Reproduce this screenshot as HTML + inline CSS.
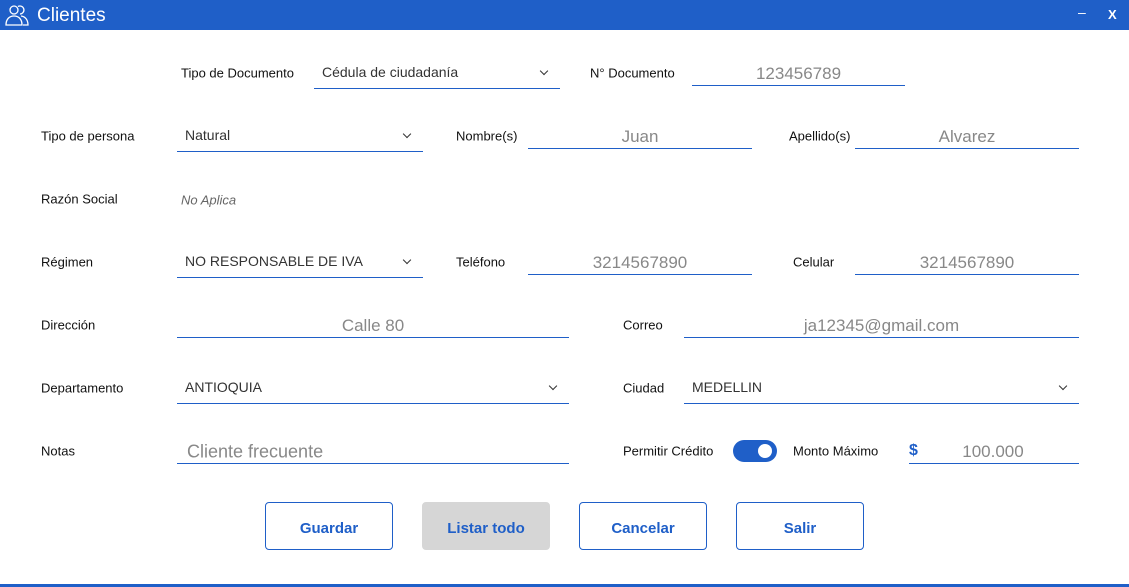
<!DOCTYPE html>
<html><head><meta charset="utf-8"><style>
*{margin:0;padding:0;box-sizing:border-box}
body{width:1129px;height:587px;background:#fff;position:relative;overflow:hidden;font-family:"Liberation Sans",sans-serif;color:#111}
.bar{position:absolute;left:0;top:0;width:1129px;height:30px;background:#1f5fc8;color:#fff}
.bar .t{position:absolute;left:37px;top:5px;font-size:19px}
.bar .m{position:absolute;left:1078px;top:4px;font-size:14px}
.bar .x{position:absolute;left:1108px;top:7px;font-size:13px;font-weight:bold}
.l{position:absolute;font-size:13px;transform:translateY(-50%)}
.u{position:absolute;border-bottom:1px solid #1f5fc8;height:1px}
.v{position:absolute;font-size:17px;color:#888;transform:translateY(-50%);text-align:center;margin-top:1px}
.s{position:absolute;font-size:14px;color:#333;transform:translateY(-50%)}
.chev{position:absolute;width:6px;height:6px;border-right:1.7px solid #333;border-bottom:1.7px solid #333;transform:rotate(45deg)}
.b{position:absolute;top:502px;width:128px;height:48px;border:1px solid #1f5fc8;border-radius:4px;color:#1f5fc8;font-weight:bold;font-size:15px;text-align:center;line-height:51px;background:#fff}
.foot{position:absolute;left:0;top:584px;width:1129px;height:3px;background:#1f5fc8}
</style></head><body>
<div class="bar">
<svg style="position:absolute;left:5px;top:3px" width="24" height="24" viewBox="0 0 24 24" fill="none" stroke="#fff" stroke-width="1.3"><circle cx="9" cy="7" r="4"/><path d="M1 22c0-6 3.5-9 8-9s8 3 8 9z"/><path d="M13 3.5a4 4 0 1 1 2 7.5"/><path d="M16 13c4 .5 7 3.5 7 9h-5"/></svg>
<span class="t">Clientes</span><span class="m">–</span><span class="x">X</span></div>

<span class="l" style="left:181px;top:73px">Tipo de Documento</span>
<span class="s" style="left:322px;top:72px">Cédula de ciudadanía</span><div class="chev" style="left:541px;top:68px"></div><div class="u" style="left:314px;top:88px;width:246px"></div>
<span class="l" style="left:590px;top:73px">N° Documento</span>
<span class="v" style="left:692px;width:213px;top:73px">123456789</span><div class="u" style="left:692px;top:85px;width:213px"></div>

<span class="l" style="left:41px;top:136px">Tipo de persona</span>
<span class="s" style="left:185px;top:135px">Natural</span><div class="chev" style="left:404px;top:131px"></div><div class="u" style="left:177px;top:151px;width:246px"></div>
<span class="l" style="left:456px;top:136px">Nombre(s)</span>
<span class="v" style="left:528px;width:224px;top:136px">Juan</span><div class="u" style="left:528px;top:148px;width:224px"></div>
<span class="l" style="left:789px;top:136px">Apellido(s)</span>
<span class="v" style="left:855px;width:224px;top:136px">Alvarez</span><div class="u" style="left:855px;top:148px;width:224px"></div>

<span class="l" style="left:41px;top:199px">Razón Social</span>
<span class="l" style="left:181px;top:200px;font-style:italic;color:#666">No Aplica</span>

<span class="l" style="left:41px;top:262px">Régimen</span>
<span class="s" style="left:185px;top:261px">NO RESPONSABLE DE IVA</span><div class="chev" style="left:404px;top:257px"></div><div class="u" style="left:177px;top:277px;width:246px"></div>
<span class="l" style="left:456px;top:262px">Teléfono</span>
<span class="v" style="left:528px;width:224px;top:262px">3214567890</span><div class="u" style="left:528px;top:274px;width:224px"></div>
<span class="l" style="left:793px;top:262px">Celular</span>
<span class="v" style="left:855px;width:224px;top:262px">3214567890</span><div class="u" style="left:855px;top:274px;width:224px"></div>

<span class="l" style="left:41px;top:325px">Dirección</span>
<span class="v" style="left:177px;width:392px;top:325px">Calle 80</span><div class="u" style="left:177px;top:337px;width:392px"></div>
<span class="l" style="left:623px;top:325px">Correo</span>
<span class="v" style="left:684px;width:395px;top:325px">ja12345@gmail.com</span><div class="u" style="left:684px;top:337px;width:395px"></div>

<span class="l" style="left:41px;top:388px">Departamento</span>
<span class="s" style="left:185px;top:387px">ANTIOQUIA</span><div class="chev" style="left:550px;top:383px"></div><div class="u" style="left:177px;top:403px;width:392px"></div>
<span class="l" style="left:623px;top:388px">Ciudad</span>
<span class="s" style="left:692px;top:387px">MEDELLIN</span><div class="chev" style="left:1060px;top:383px"></div><div class="u" style="left:684px;top:403px;width:395px"></div>

<span class="l" style="left:41px;top:451px">Notas</span>
<span class="v" style="left:187px;top:451px;font-size:18px;text-align:left">Cliente frecuente</span><div class="u" style="left:177px;top:463px;width:392px"></div>
<span class="l" style="left:623px;top:451px">Permitir Crédito</span>
<div style="position:absolute;left:733px;top:440px;width:44px;height:22px;border-radius:11px;background:#1f5fc8"><div style="position:absolute;right:5px;top:4px;width:14px;height:14px;border-radius:50%;background:#fff"></div></div>
<span class="l" style="left:793px;top:451px">Monto Máximo</span>
<span class="l" style="left:909px;top:451px;color:#1f5fc8;font-weight:bold;font-size:16px">$</span>
<span class="v" style="left:930px;width:126px;top:451px">100.000</span><div class="u" style="left:909px;top:463px;width:170px"></div>

<div class="b" style="left:265px">Guardar</div>
<div class="b" style="left:422px;background:#d6d6d6;border-color:#d6d6d6">Listar todo</div>
<div class="b" style="left:579px">Cancelar</div>
<div class="b" style="left:736px">Salir</div>
<div class="foot"></div>
</body></html>
